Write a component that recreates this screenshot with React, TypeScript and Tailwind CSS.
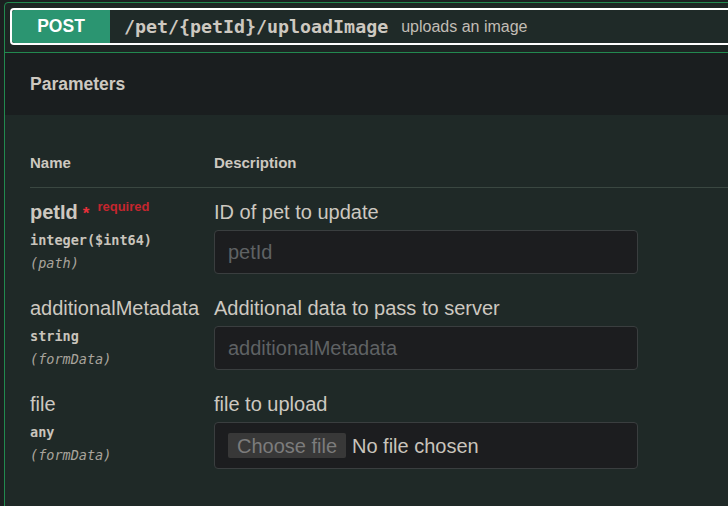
import React from "react";

const sans = { fontFamily: '"Liberation Sans", Arial, sans-serif' };
const mono = { fontFamily: '"DejaVu Sans Mono", "Liberation Mono", monospace' };

type Param = {
  name: string;
  type: string;
  location: string;
  description: string;
  required?: boolean;
  kind: "text" | "file";
};

const params: Param[] = [
  { name: "petId", type: "integer($int64)", location: "(path)", description: "ID of pet to update", required: true, kind: "text" },
  { name: "additionalMetadata", type: "string", location: "(formData)", description: "Additional data to pass to server", kind: "text" },
  { name: "file", type: "any", location: "(formData)", description: "file to upload", kind: "file" },
];

function ParamRow({ p }: { p: Param }) {
  return (
    <div className="flex pt-[12px] pb-[10px]">
      <div className="w-[184px] shrink-0">
        <div className="flex items-start h-[24px]">
          <span className={`text-[20px] leading-[24px] text-[#cdc8c0] ${p.required ? "font-bold" : ""}`}>{p.name}</span>
          {p.required && (
            <>
              <span className="ml-[5px] mt-[2px] text-[17px] leading-[24px] font-bold text-[#e8303a]">*</span>
              <span className="ml-[8px] -mt-[1px] text-[13px] leading-[16px] font-bold text-[#c4262e]">required</span>
            </>
          )}
        </div>
        <div style={mono} className="mt-[8px] text-[13.5px] leading-[16px] font-bold text-[#c9c4bc]">
          {p.type}
        </div>
        <div style={mono} className="mt-[7px] text-[13.5px] leading-[16px] italic text-[#a9a49c]">
          {p.location}
        </div>
      </div>
      <div className="flex-1">
        <div className="text-[20px] leading-[24px] text-[#cdc8c0]">{p.description}</div>
        {p.kind === "text" ? (
          <input
            readOnly
            placeholder={p.name}
            style={sans}
            className="mt-[6px] block w-[424px] h-[44px] rounded-[4px] border border-[#3a3e3f] bg-[#1c1d1f] px-[13px] text-[20px] text-[#cdc8c0] outline-none placeholder:text-[#5f6264]"
          />
        ) : (
          <div className="mt-[6px] flex items-center w-[424px] h-[47px] rounded-[4px] border border-[#3a3e3f] bg-[#1c1d1f] pl-[13px]">
            <span className="h-[25px] w-[118px] flex items-center justify-center rounded-[2px] bg-[#383838] text-[20px] text-[#7c7c7c]">
              Choose file
            </span>
            <span className="ml-[6px] text-[20px] text-[#c9c4bc]">No file chosen</span>
          </div>
        )}
      </div>
    </div>
  );
}

export default function App() {
  return (
    <div style={sans} className="w-[728px] h-[506px] overflow-hidden bg-[#1b1f20] pt-[2px] pl-[4px]">
      <div className="w-[800px] h-[540px] rounded-[4px] border border-[#22894f] bg-[#1d2523]">
        {/* summary */}
        <div className="px-[5px] pt-[5px] pb-[7px] border-b border-[#22894f]">
          <div className="flex items-center h-[37px] rounded-[4px] border-2 border-white bg-[#1f2a28]">
            <div className="w-[98px] h-full flex items-center justify-center rounded-l-[3px] bg-[#2b9571] text-[17.5px] font-bold text-white">
              POST
            </div>
            <span style={mono} className="ml-[14px] text-[18.3px] font-bold text-[#cdc8c0]">
              /pet/&#123;petId&#125;/uploadImage
            </span>
            <span className="ml-[13px] text-[16px] text-[#c2bdb5]">uploads an image</span>
          </div>
        </div>
        {/* parameters header */}
        <div className="h-[62px] flex items-center pl-[25px] bg-[#1a1e1f]">
          <span className="text-[17.5px] font-bold text-[#cdc8c0]">Parameters</span>
        </div>
        {/* table */}
        <div className="bg-[#1f2927] pl-[25px] pt-[40px] h-[420px]">
          <div className="flex pb-[16px] border-b border-[#3a4741] text-[15px] leading-[16px] font-bold text-[#cdc8c0]">
            <div className="w-[184px]">Name</div>
            <div>Description</div>
          </div>
          {params.map((p) => (
            <ParamRow key={p.name} p={p} />
          ))}
        </div>
      </div>
    </div>
  );
}
